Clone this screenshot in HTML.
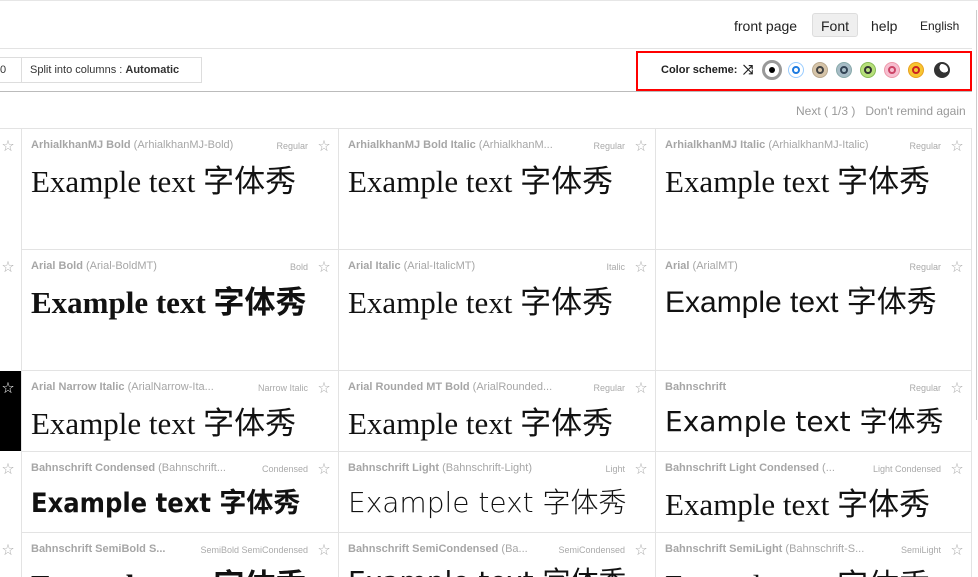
<!DOCTYPE html>
<html style="overflow:hidden;width:978px;height:577px"><head><meta charset="utf-8"><style>
*{margin:0;padding:0;box-sizing:border-box}
body{width:978px;height:577px;overflow:hidden;background:#fff;font-family:"Liberation Sans","Noto Sans CJK SC",sans-serif;position:relative;color:#222}
.a{position:absolute}
.nav{top:14px;font-size:14px;color:#222;height:24px;line-height:24px}
.cell{position:absolute;border-right:1px solid #e3e3e3;border-bottom:1px solid #e3e3e3;overflow:hidden}
.nm{position:absolute;left:9px;top:10px;font-size:11px;color:#a6a6a6;white-space:nowrap}
.nm b{font-weight:bold}
.st{position:absolute;right:30px;top:12px;font-size:9px;color:#aaa}
.star{position:absolute;right:8px;top:8px;font-size:12px;color:#aaa}
.ex{position:absolute;left:9px;top:27px;font-size:31px;color:#111;white-space:nowrap;font-family:"Liberation Serif","Noto Sans CJK SC",serif}
.ss{font-family:"DejaVu Sans","Noto Sans CJK SC",sans-serif;font-size:28px}
.dot{position:absolute;top:62px;width:16px;height:16px;border-radius:50%}
</style></head><body>
<div class="a" style="left:0;top:0;width:978px;height:1px;background:#e6e6e6"></div>
<div class="a nav" style="left:734px">front page</div>
<div class="a nav" style="left:812px;width:46px;background:#efefef;border:1px solid #ddd;border-radius:3px;text-align:center;top:13px">Font</div>
<div class="a nav" style="left:871px">help</div>
<div class="a nav" style="left:920px;font-size:12px">English</div>
<div class="a" style="left:0;top:48px;width:972px;height:1px;background:#e3e3e3"></div>
<div class="a" style="left:0;top:57px;width:202px;height:26px;border:1px solid #ddd;border-left:none;font-size:11px;line-height:25px;color:#333"><span style="position:absolute;left:0">0</span><span style="position:absolute;left:21px;top:0;width:1px;height:24px;background:#ddd"></span><span style="position:absolute;left:30px">Split into columns : <b>Automatic</b></span></div>
<div class="a" style="left:636px;top:51px;width:336px;height:40px;border:2px solid #f00"></div>
<div class="a" style="left:661px;top:64px;font-size:11px;font-weight:bold;color:#222">Color scheme:</div>
<div class="a" style="left:743px;top:62px;font-size:13px;font-weight:bold">⤨</div>
<div class="dot" style="left:762px;top:60px;width:20px;height:20px;border:3px solid #999;background:#fff"><div class="a" style="left:4px;top:4px;width:6px;height:6px;border-radius:50%;background:#000"></div></div>
<div class="dot" style="left:788px;border:1px solid #9cf;background:#fff"><div class="a" style="left:3px;top:3px;width:8px;height:8px;border-radius:50%;border:2px solid #1e7be0"></div></div>
<div class="dot" style="left:812px;background:#d6c4a8;border:1px solid #b9a88d"><div class="a" style="left:3px;top:3px;width:8px;height:8px;border-radius:50%;border:2px solid #444"></div></div>
<div class="dot" style="left:836px;background:#a7bcc6;border:1px solid #8aa"><div class="a" style="left:3px;top:3px;width:8px;height:8px;border-radius:50%;border:2px solid #345"></div></div>
<div class="dot" style="left:860px;background:#b7e07a;border:1px solid #8b5"><div class="a" style="left:3px;top:3px;width:8px;height:8px;border-radius:50%;border:2px solid #333"></div></div>
<div class="dot" style="left:884px;background:#f6bfd0;border:1px solid #e9a"><div class="a" style="left:3px;top:3px;width:8px;height:8px;border-radius:50%;border:2px solid #c46"></div></div>
<div class="dot" style="left:908px;background:#f7c531;border:1px solid #e9a020"><div class="a" style="left:3px;top:3px;width:8px;height:8px;border-radius:50%;border:2px solid #c22"></div></div>
<div class="dot" style="left:934px;border:2px solid #333;background:radial-gradient(circle at 70% 30%,#fff 40%,#333 42%)"></div>
<div class="a" style="left:0;top:91px;width:972px;height:1px;background:#bbb"></div>
<div class="a" style="left:796px;top:104px;font-size:12px;color:#999">Next ( 1/3 )&nbsp;&nbsp; Don't remind again</div>
<div class="a" style="left:976px;top:10px;width:1px;height:410px;background:#ccc"></div>
<div class="a" style="left:0;top:128px;width:972px;height:1px;background:#e3e3e3"></div>
<div class="a" style="left:0;top:371px;width:21px;height:80px;background:#000"></div>
<div class="a" style="left:2px;top:137px;font-size:12px;color:#aaa">☆</div>
<div class="a" style="left:2px;top:258px;font-size:12px;color:#aaa">☆</div>
<div class="a" style="left:2px;top:379px;font-size:12px;color:#fff">☆</div>
<div class="a" style="left:2px;top:460px;font-size:12px;color:#aaa">☆</div>
<div class="a" style="left:2px;top:541px;font-size:12px;color:#aaa">☆</div>
<div class="a" style="left:21px;top:128px;width:1px;height:449px;background:#e3e3e3"></div>

<div class="cell" style="left:22px;top:129px;width:317px;height:121px"><div class="nm"><b>ArhialkhanMJ Bold</b> (ArhialkhanMJ-Bold)</div><div class="st">Regular</div><div class="star">☆</div><div class="ex">Example text 字体秀</div></div>
<div class="cell" style="left:339px;top:129px;width:317px;height:121px"><div class="nm"><b>ArhialkhanMJ Bold Italic</b> (ArhialkhanM...</div><div class="st">Regular</div><div class="star">☆</div><div class="ex">Example text 字体秀</div></div>
<div class="cell" style="left:656px;top:129px;width:316px;height:121px"><div class="nm"><b>ArhialkhanMJ Italic</b> (ArhialkhanMJ-Italic)</div><div class="st">Regular</div><div class="star">☆</div><div class="ex">Example text 字体秀</div></div>

<div class="cell" style="left:22px;top:250px;width:317px;height:121px"><div class="nm"><b>Arial Bold</b> (Arial-BoldMT)</div><div class="st">Bold</div><div class="star">☆</div><div class="ex" style="font-weight:bold">Example text 字体秀</div></div>
<div class="cell" style="left:339px;top:250px;width:317px;height:121px"><div class="nm"><b>Arial Italic</b> (Arial-ItalicMT)</div><div class="st">Italic</div><div class="star">☆</div><div class="ex">Example text 字体秀</div></div>
<div class="cell" style="left:656px;top:250px;width:316px;height:121px"><div class="nm"><b>Arial</b> (ArialMT)</div><div class="st">Regular</div><div class="star">☆</div><div class="ex" style="font-family:'Liberation Sans','Noto Sans CJK SC',sans-serif;font-size:30px">Example text 字体秀</div></div>

<div class="cell" style="left:22px;top:371px;width:317px;height:81px"><div class="nm"><b>Arial Narrow Italic</b> (ArialNarrow-Ita...</div><div class="st">Narrow Italic</div><div class="star">☆</div><div class="ex">Example text 字体秀</div></div>
<div class="cell" style="left:339px;top:371px;width:317px;height:81px"><div class="nm"><b>Arial Rounded MT Bold</b> (ArialRounded...</div><div class="st">Regular</div><div class="star">☆</div><div class="ex">Example text 字体秀</div></div>
<div class="cell" style="left:656px;top:371px;width:316px;height:81px"><div class="nm"><b>Bahnschrift</b></div><div class="st">Regular</div><div class="star">☆</div><div class="ex ss" style="top:29px">Example text 字体秀</div></div>

<div class="cell" style="left:22px;top:452px;width:317px;height:81px"><div class="nm"><b>Bahnschrift Condensed</b> (Bahnschrift...</div><div class="st">Condensed</div><div class="star">☆</div><div class="ex ss" style="font-family:'DejaVu Sans Condensed','DejaVu Sans','Noto Sans CJK SC',sans-serif;font-weight:bold;font-size:27px;top:29px">Example text 字体秀</div></div>
<div class="cell" style="left:339px;top:452px;width:317px;height:81px"><div class="nm"><b>Bahnschrift Light</b> (Bahnschrift-Light)</div><div class="st">Light</div><div class="star">☆</div><div class="ex ss" style="font-weight:300;font-size:28px;top:29px">Example text 字体秀</div></div>
<div class="cell" style="left:656px;top:452px;width:316px;height:81px"><div class="nm"><b>Bahnschrift Light Condensed</b> (...</div><div class="st">Light Condensed</div><div class="star">☆</div><div class="ex">Example text 字体秀</div></div>

<div class="cell" style="left:22px;top:533px;width:317px;height:44px;border-bottom:none"><div class="nm"><b>Bahnschrift SemiBold S...</b></div><div class="st">SemiBold SemiCondensed</div><div class="star">☆</div><div class="ex" style="font-weight:bold">Example text 字体秀</div></div>
<div class="cell" style="left:339px;top:533px;width:317px;height:44px;border-bottom:none"><div class="nm"><b>Bahnschrift SemiCondensed</b> (Ba...</div><div class="st">SemiCondensed</div><div class="star">☆</div><div class="ex ss">Example text 字体秀</div></div>
<div class="cell" style="left:656px;top:533px;width:316px;height:44px;border-bottom:none"><div class="nm"><b>Bahnschrift SemiLight</b> (Bahnschrift-S...</div><div class="st">SemiLight</div><div class="star">☆</div><div class="ex">Example text 字体秀</div></div>
</body></html>
